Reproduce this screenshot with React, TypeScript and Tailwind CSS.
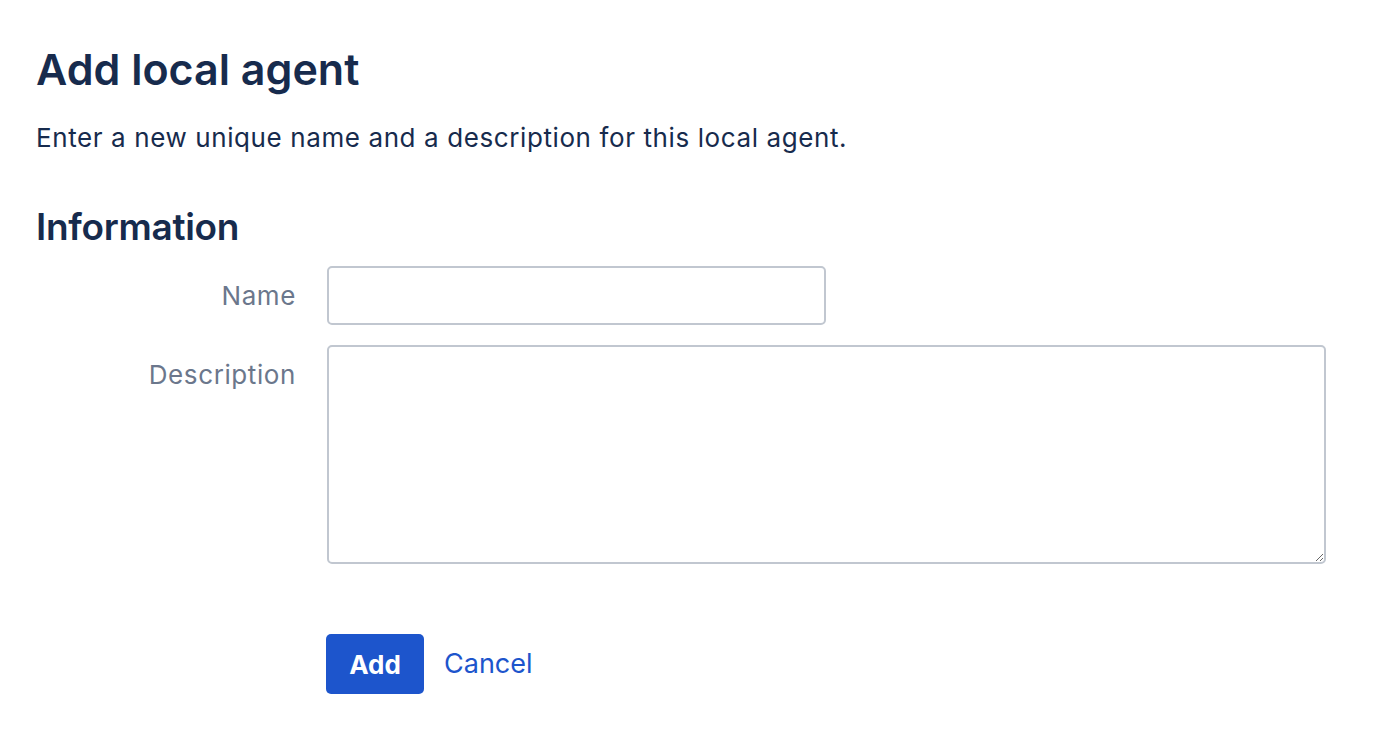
import React from "react";

export default function App() {
  return (
    <div className="min-h-screen w-full bg-white text-[#172B4D]" style={{ fontFamily: "Inter, 'Noto Sans', sans-serif" }}>
      <div className="px-[36px] pt-[42px]">
        <h1 className="text-[43px] leading-[54px] font-semibold">Add local agent</h1>
        <p className="mt-[26px] text-[26px] leading-[32px] tracking-[0.6px]">Enter a new unique name and a description for this local agent.</p>
        <h2 className="mt-[50px] text-[37px] leading-[46px] font-semibold tracking-[-0.3px]">Information</h2>
        <div className="mt-[16px] flex flex-col gap-[20px]">
          <div className="flex items-start">
            <label className="w-[260px] pt-[2px] text-right text-[26px] leading-[56px] tracking-[0.6px] text-[#6B778C]">Name</label>
            <div className="ml-[31px]">
              <input className="h-[59px] w-[499px] rounded-[5px] border-2 border-[#C1C7D0] bg-white outline-none" />
            </div>
          </div>
          <div className="flex items-start">
            <label className="w-[260px] pt-[1px] text-right text-[26px] leading-[57px] tracking-[0.6px] text-[#6B778C]">Description</label>
            <div className="ml-[31px]">
              <textarea className="block h-[219px] w-[999px] rounded-[5px] border-2 border-[#C1C7D0] bg-white outline-none" />
            </div>
          </div>
        </div>
        <div className="mt-[70px] flex items-center pl-[290px]">
          <button className="h-[60px] w-[98px] rounded-[5px] bg-[#1D55CC] text-[26px] font-bold text-white">Add</button>
          <a className="ml-[20px] text-[27px] text-[#1D55CC]">Cancel</a>
        </div>
      </div>
    </div>
  );
}
